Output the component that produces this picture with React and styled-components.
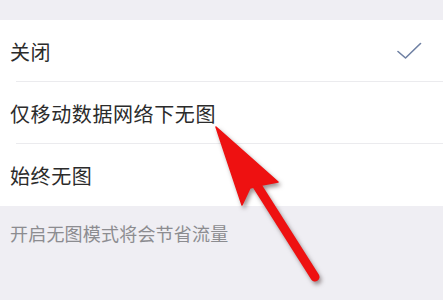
import React from 'react';
import styled, { createGlobalStyle } from 'styled-components';

const Global = createGlobalStyle`
    html, body {
        margin: 0;
        padding: 0;
        background: #efeef3;
    }
    body {
        font-family: "Noto Sans CJK SC", "Noto Sans", sans-serif;
    }
`;

const Page = styled.div`
    position: relative;
    width: 443px;
    height: 300px;
    overflow: hidden;
    background: #efeef3;
    padding-top: 20px;
    box-sizing: border-box;
`;

const List = styled.ul`
    list-style: none;
    margin: 0;
    padding: 0;
    background: #fff;
`;

const Row = styled.li`
    position: relative;
    display: flex;
    align-items: center;
    justify-content: space-between;
    height: 62px;
    padding: 0 20px 0 10px;
    font-size: 20px;
    color: #2b2b2b;
    letter-spacing: 0.6px;
    ${({ divider }) => divider && `
        &::after {
            content: '';
            position: absolute;
            left: 16px;
            right: 0;
            bottom: 0;
            height: 1px;
            background: #ebebee;
        }
    `}
`;

const Hint = styled.p`
    margin: 0;
    padding: 14px 10px 0;
    font-size: 18px;
    color: #8c8c90;
    letter-spacing: 0.2px;
`;

const Overlay = styled.svg`
    position: absolute;
    left: 0;
    top: 0;
    pointer-events: none;
    filter: drop-shadow(2px 3px 2px rgba(60, 40, 40, 0.5));
`;

const Check = () => (
    <svg width="26" height="18" viewBox="0 0 26 18">
        <polyline points="1,9.5 8.5,16 23.5,1.5" fill="none" stroke="#6f80a3" strokeWidth="1.6" strokeLinecap="round" strokeLinejoin="round" />
    </svg>
);

const options = [
    { label: '关闭', checked: true },
    { label: '仅移动数据网络下无图' },
    { label: '始终无图' },
];

export default () => (
    <Page>
        <Global />
        <List>
            {options.map((o, i) => (
                <Row key={o.label} divider={i < options.length - 1}>
                    <span>{o.label}</span>
                    {o.checked && <Check />}
                </Row>
            ))}
        </List>
        <Hint>开启无图模式将会节省流量</Hint>
        <Overlay width="443" height="300" viewBox="0 0 443 300">
            <line x1="256" y1="184" x2="315" y2="277" stroke="#ee1111" strokeWidth="9" strokeLinecap="round" />
            <polygon points="216,127 278,182 262,185 250,188 242,205" fill="#ee1111" stroke="#ee1111" strokeWidth="1.5" strokeLinejoin="round" />
        </Overlay>
    </Page>
);
